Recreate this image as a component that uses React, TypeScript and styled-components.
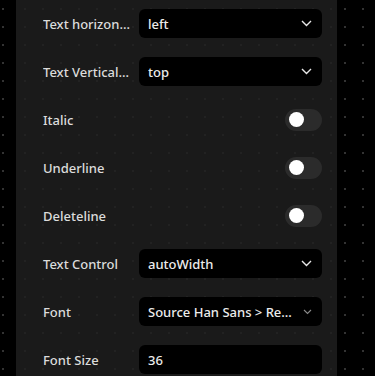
import styled, { createGlobalStyle } from "styled-components";

const GlobalStyle = createGlobalStyle`
  html, body {
    margin: 0;
    padding: 0;
    background-color: #000;
    background-image: radial-gradient(circle, #333 0.8px, transparent 1.2px);
    background-size: 18px 18px;
    background-position: -6px 0px;
    font-family: "Noto Sans", "Open Sans", sans-serif;
    overflow: hidden;
  }
`;

const rows = [
  { label: "Text horizontal align", kind: "select", value: "left" },
  { label: "Text Vertical align", kind: "select", value: "top" },
  { label: "Italic", kind: "switch" },
  { label: "Underline", kind: "switch" },
  { label: "Deleteline", kind: "switch" },
  { label: "Text Control", kind: "select", value: "autoWidth" },
  { label: "Font", kind: "font", value: "Source Han Sans > Regular" },
  { label: "Font Size", kind: "input", value: "36" },
];

const Chevron = ({ small }: { small?: boolean }) =>
  small ? (
    <svg width="9" height="6" viewBox="0 0 9 6" fill="none">
      <path d="M1 1l3.5 3.5L8 1" stroke="#8a8a8a" strokeWidth="1.1" />
    </svg>
  ) : (
    <svg width="11" height="7" viewBox="0 0 11 7" fill="none">
      <path d="M1 1l4.5 4.5L10 1" stroke="#e8e8e8" strokeWidth="1.4" />
    </svg>
  );

const App = () => {
  return (
    <Page>
      <GlobalStyle />
      <Panel>
        {rows.map((r) => (
          <Row key={r.label}>
            <Label>{r.label}</Label>
            {r.kind === "switch" ? (
              <SwitchCell>
                <Switch>
                  <Knob />
                </Switch>
              </SwitchCell>
            ) : (
              <Field>
                <Value>{r.value}</Value>
                {r.kind === "select" && <Chevron />}
                {r.kind === "font" && <Chevron small />}
              </Field>
            )}
          </Row>
        ))}
      </Panel>
    </Page>
  );
};

export default App;

const Page = styled.div`
  width: 375px;
  height: 376px;
  padding-left: 16px;
  box-sizing: border-box;
`;

const Panel = styled.div`
  width: 321px;
  height: 376px;
  box-sizing: border-box;
  background-color: #1a1a1a;
  background-image: radial-gradient(circle, #222 0.8px, transparent 1.2px);
  background-size: 18px 18px;
  padding: 9px 15px 0 27px;
  display: flex;
  flex-direction: column;
  gap: 19px;
`;

const Row = styled.div`
  height: 29px;
  display: flex;
  align-items: center;
`;

const Label = styled.div`
  width: 88px;
  margin-right: 8px;
  flex-shrink: 0;
  color: #dcdcdc;
  font-size: 13px;
  font-weight: 500;
  white-space: nowrap;
  overflow: hidden;
  text-overflow: ellipsis;
`;

const Field = styled.div`
  flex: 1;
  min-width: 0;
  height: 29px;
  background: #000;
  border-radius: 6px;
  display: flex;
  align-items: center;
  padding: 0 10px 0 9px;
  box-sizing: border-box;
  gap: 6px;
`;

const Value = styled.div`
  flex: 1;
  min-width: 0;
  color: #ececec;
  font-size: 13px;
  font-weight: 500;
  white-space: nowrap;
  overflow: hidden;
  text-overflow: ellipsis;
`;

const SwitchCell = styled.div`
  flex: 1;
  display: flex;
  justify-content: flex-end;
`;

const Switch = styled.div`
  width: 37px;
  height: 22px;
  border-radius: 11px;
  background: #2b2b2b;
  display: flex;
  align-items: center;
  padding-left: 4px;
  box-sizing: border-box;
`;

const Knob = styled.div`
  width: 15px;
  height: 15px;
  border-radius: 50%;
  background: #fff;
`;
